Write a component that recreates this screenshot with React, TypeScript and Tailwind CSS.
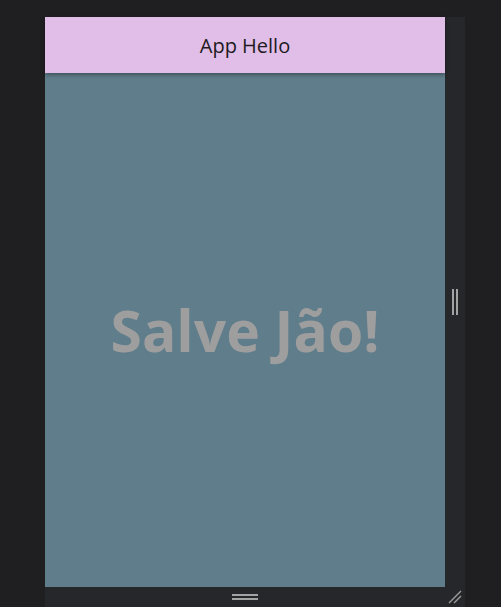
import React from 'react';

const App: React.FC = () => {
  return (
    <div className="w-[501px] h-[607px] bg-[#1f1f21] pt-[17px] pl-[45px] overflow-hidden">
      <div className="w-[420px] h-[590px] flex flex-col bg-[#26272b]">
        <div className="flex flex-1">
          {/* App frame */}
          <div className="w-[400px] h-[570px] flex flex-col bg-[#607d8b]">
            <header className="h-[56px] shrink-0 bg-[#e1bee7] flex items-center justify-center shadow-[0_2px_4px_rgba(0,0,0,0.35)] relative z-10">
              <span className="text-[20px] text-[#1d1a22] mt-[1px]" style={{ fontFamily: '"Open Sans", sans-serif' }}>
                App Hello
              </span>
            </header>
            <main className="flex-1 flex items-center justify-center">
              <span
                className="text-[57px] font-bold text-[#9e9e9e] leading-none"
                style={{ fontFamily: '"Open Sans", sans-serif' }}
              >
                Salve Jão!
              </span>
            </main>
          </div>
          {/* Right resize strip */}
          <div className="w-[20px] flex items-center justify-center">
            <div className="flex gap-[2px]">
              <div className="w-[2px] h-[26px] bg-[#a3a3a3]" />
              <div className="w-[2px] h-[26px] bg-[#a3a3a3]" />
            </div>
          </div>
        </div>
        {/* Bottom resize strip */}
        <div className="h-[20px] flex">
          <div className="w-[400px] flex items-center justify-center">
            <div className="flex flex-col gap-[2px]">
              <div className="w-[26px] h-[2px] bg-[#a3a3a3]" />
              <div className="w-[26px] h-[2px] bg-[#a3a3a3]" />
            </div>
          </div>
          <div className="w-[20px] flex items-center justify-center">
            <svg width="14" height="14" viewBox="0 0 14 14">
              <line x1="1" y1="13" x2="13" y2="1" stroke="#9a9a9a" strokeWidth="1.5" />
              <line x1="6" y1="13" x2="13" y2="6" stroke="#9a9a9a" strokeWidth="1.5" />
            </svg>
          </div>
        </div>
      </div>
    </div>
  );
};

export default App;
